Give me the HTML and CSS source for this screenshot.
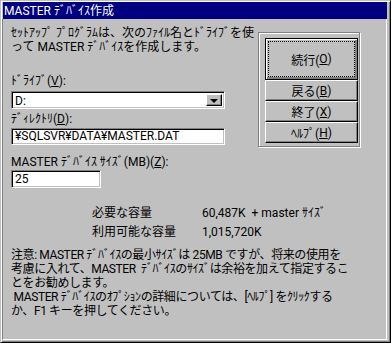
FILE: index.html
```html
<!DOCTYPE html>
<html lang="ja">
<head>
  <meta charset="UTF-8" />
  <title>MASTER ﾃﾞﾊﾞｲｽ作成</title>
  <link rel="stylesheet" href="styles.css">
</head>
<body>
  <div class="window">
    <div class="titlebar">MASTER ﾃﾞﾊﾞｲｽ作成</div>

    <div class="client">
      <div class="top">
        <div class="fields">
          <p class="intro">ｾｯﾄｱｯﾌﾟ ﾌﾟﾛｸﾞﾗﾑは、次のﾌｧｲﾙ名とﾄﾞﾗｲﾌﾞを使<br>って MASTER ﾃﾞﾊﾞｲｽを作成します。</p>

          <div class="label label-drive">ﾄﾞﾗｲﾌﾞ(<u>V</u>):</div>
          <div class="field combo">
            <span class="value">D:</span>
            <span class="arrow"><span class="tri"></span></span>
          </div>

          <div class="label">ﾃﾞｨﾚｸﾄﾘ(<u>D</u>):</div>
          <div class="field dir">¥SQLSVR¥DATA¥MASTER.DAT</div>

          <div class="label label-size">MASTER ﾃﾞﾊﾞｲｽ ｻｲｽﾞ(MB)(<u>Z</u>):</div>
          <div class="field size">25</div>
        </div>

        <div class="group">
          <button class="btn default"><span class="focus">続行(<u>O</u>)</span></button>
          <button class="btn">戻る(<u>B</u>)</button>
          <button class="btn">終了(<u>X</u>)</button>
          <button class="btn">ﾍﾙﾌﾟ(<u>H</u>)</button>
        </div>
      </div>

      <div class="stats">
        <div>必要な容量</div>
        <div>60,487K &nbsp;+ master ｻｲｽﾞ</div>
        <div>利用可能な容量</div>
        <div>1,015,720K</div>
      </div>

      <p class="note">注意: MASTER ﾃﾞﾊﾞｲｽの最小ｻｲｽﾞは 25MB ですが、将来の使用を<br>考慮に入れて、MASTER &nbsp;ﾃﾞﾊﾞｲｽのｻｲｽﾞは余裕を加えて指定するこ<br>とをお勧めします。</p>

      <p class="note note-help">&nbsp;MASTER ﾃﾞﾊﾞｲｽのｵﾌﾟｼｮﾝの詳細については、[ﾍﾙﾌﾟ] をｸﾘｯｸする<br>か、F1 キーを押してください。</p>
    </div>
  </div>
</body>
</html>
```

FILE: styles.css
```css
:root {
  --face: #c0c0c0;
  --shadow: #808080;
  --light: #fff;
  --dark: #000;
  --title: #000080;
}

* {
  box-sizing: border-box;
}

body {
  margin: 0;
  font-family: Roboto, "Noto Sans CJK JP", sans-serif;
  font-size: 12px;
  color: #000;
  background: var(--face);
}

.window {
  width: 391px;
  height: 343px;
  background: var(--face);
  border: 1px solid;
  border-color: var(--face) var(--dark) var(--dark) var(--face);
  box-shadow: inset 1px 1px var(--light), inset -1px -1px var(--shadow);
  padding: 1px 3px 2px 1px;
  display: flex;
  flex-direction: column;
}

.titlebar {
  height: 17px;
  margin-left: 1px;
  padding: 1px 0 0 1px;
  line-height: 16px;
  background: var(--title);
  color: #fff;
  white-space: nowrap;
}

.client {
  flex: 1;
  border-left: 1px solid var(--shadow);
  border-right: 1px solid var(--light);
  border-bottom: 1px solid var(--light);
  padding: 6px 0 0 8px;
}

.top {
  display: flex;
  align-items: flex-start;
}

.fields {
  width: 247px;
}

p {
  margin: 0;
}

.intro {
  padding-top: 1px;
  line-height: 14px;
  white-space: nowrap;
}

.label {
  line-height: 14px;
  margin-top: 3px;
  white-space: nowrap;
}

.label-drive {
  margin-top: 20px;
}

.label-size {
  margin-top: 10px;
}

.field {
  width: 214px;
  background: #fff;
  border: 1px solid;
  border-color: var(--shadow) var(--light) var(--light) var(--shadow);
  box-shadow: inset 1px 1px var(--dark), inset -1px -1px var(--face);
  padding: 0 2px 0 3px;
  white-space: nowrap;
}

.combo {
  height: 18px;
  margin-top: 3px;
  display: flex;
  padding: 2px 2px 2px 3px;
  line-height: 14px;
}

.combo .value {
  flex: 1;
}

.arrow {
  width: 16px;
  background: var(--face);
  border: 1px solid;
  border-color: var(--light) var(--dark) var(--dark) var(--light);
  box-shadow: inset -1px -1px var(--shadow);
  display: flex;
  align-items: center;
  justify-content: center;
}

.tri {
  width: 0;
  height: 0;
  border-left: 4px solid transparent;
  border-right: 4px solid transparent;
  border-top: 4px solid var(--dark);
  margin-top: 1px;
}

.dir {
  height: 17px;
  margin-top: 2px;
  line-height: 15px;
}

.size {
  width: 90px;
  height: 18px;
  margin-top: 1px;
  line-height: 16px;
}

.group {
  width: 102px;
  height: 115px;
  margin-top: 7px;
  border: 1px solid var(--shadow);
  box-shadow: inset 1px 1px var(--light), 1px 1px var(--light);
  padding: 5px 1px 3px 6px;
  display: flex;
  flex-direction: column;
}

.btn {
  height: 21px;
  padding: 0;
  font: inherit;
  color: #000;
  background: var(--face);
  border: 1px solid;
  border-color: var(--light) var(--dark) var(--dark) var(--light);
  box-shadow: inset -1px -1px var(--shadow);
  display: flex;
  align-items: center;
  justify-content: center;
}

.btn.default {
  height: 42px;
  border: 1px solid var(--dark);
  box-shadow: inset 1px 1px var(--light), inset -2px -2px var(--shadow);
  padding: 2px;
}

.focus {
  width: 100%;
  height: 100%;
  border: 1px dotted var(--dark);
  display: flex;
  align-items: center;
  justify-content: center;
}

.stats {
  display: grid;
  grid-template-columns: 110px auto;
  row-gap: 5px;
  line-height: 14px;
  margin: 18px 0 0 81px;
  white-space: nowrap;
}

.note {
  line-height: 14px;
  margin-top: 9px;
  white-space: nowrap;
  letter-spacing: -0.4px;
}

.note-help {
  margin-top: 0;
}
```
